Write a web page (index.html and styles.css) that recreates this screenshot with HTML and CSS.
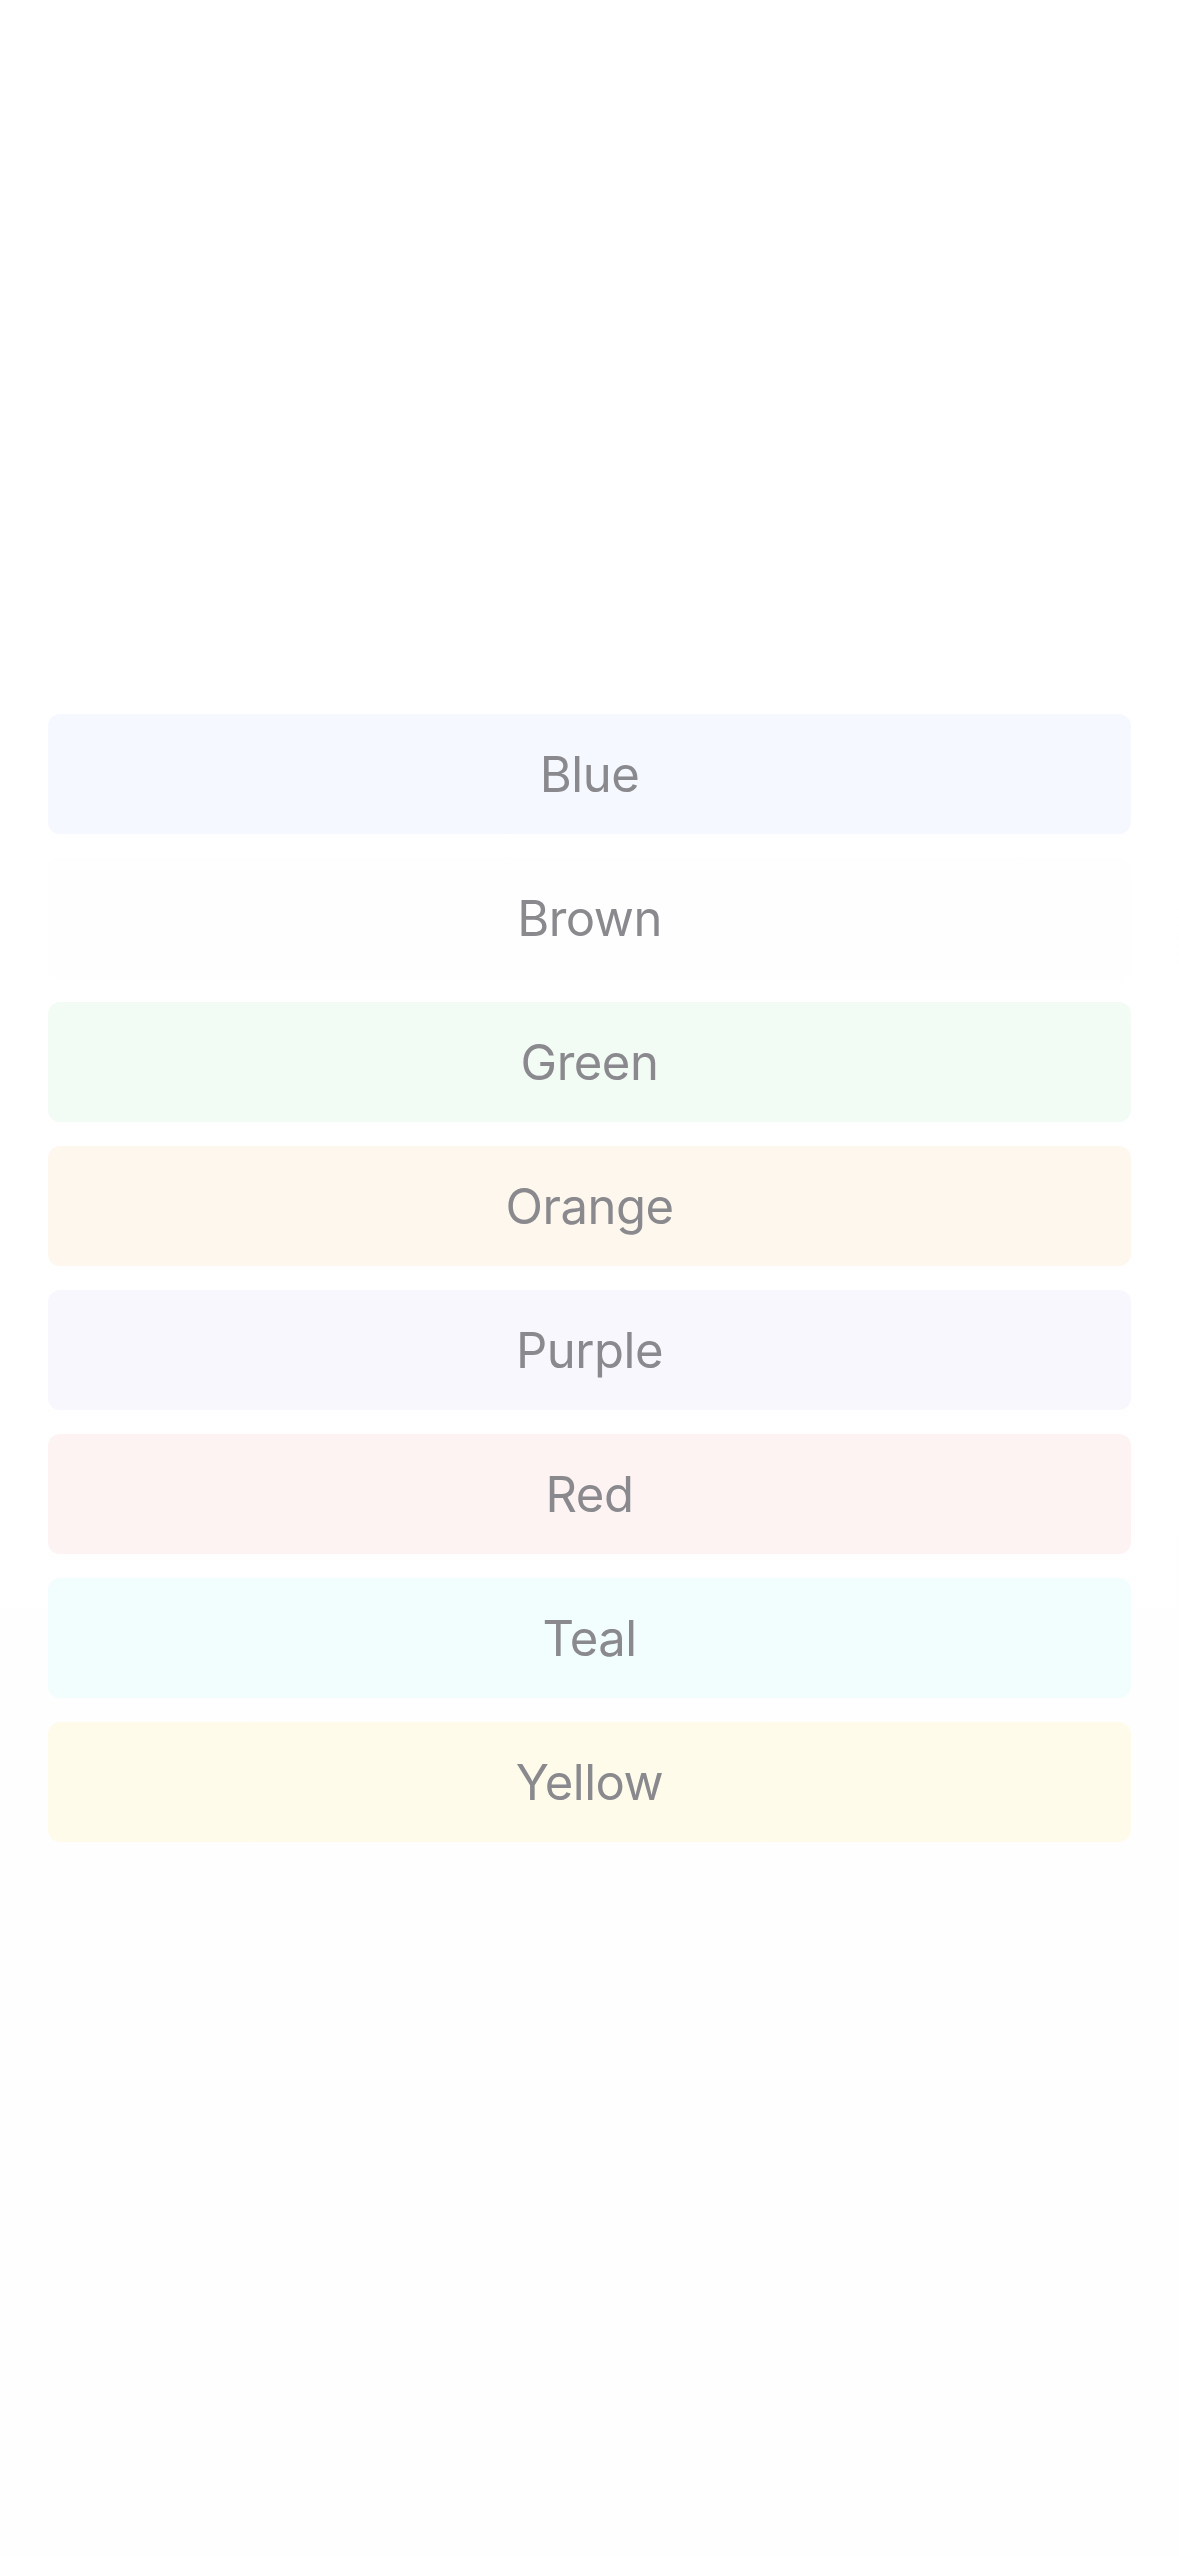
FILE: index.html
```html
<!DOCTYPE html>
<html lang="en">
<head>
<meta charset="utf-8">
<meta name="viewport" content="width=1179">
<title>Colors</title>
<link rel="stylesheet" href="styles.css">
</head>
<body>
<main class="screen">
  <ul class="color-list">
    <li class="color-item blue">Blue</li>
    <li class="color-item brown">Brown</li>
    <li class="color-item green">Green</li>
    <li class="color-item orange">Orange</li>
    <li class="color-item purple">Purple</li>
    <li class="color-item red">Red</li>
    <li class="color-item teal">Teal</li>
    <li class="color-item yellow">Yellow</li>
  </ul>
</main>
</body>
</html>
```
FILE: styles.css
```css
html, body {
  margin: 0;
  padding: 0;
}
body {
  width: 1179px;
  min-height: 2556px;
  background: linear-gradient(#ffffff 0, #ffffff 700px, #fefefe 1900px, #fefefe 100%);
  font-family: Inter, "Noto Sans", "Liberation Sans", sans-serif;
}
.screen {
  padding: 714px 48px 0;
}
.color-list {
  list-style: none;
  margin: 0;
  padding: 0;
  display: flex;
  flex-direction: column;
  gap: 24px;
}
.color-item {
  height: 120px;
  border-radius: 12px;
  display: flex;
  align-items: center;
  justify-content: center;
  font-size: 49px;
  letter-spacing: -0.5px;
  color: #8a8a8e;
  line-height: 1;
}
.blue { background: #f5f8fe; }
.brown { background: #fefefe; }
.green { background: #f2fbf4; }
.orange { background: #fef7ee; }
.purple { background: #f8f7fd; }
.red { background: #fdf3f3; }
.teal { background: #f2fefd; }
.yellow { background: #fffbeb; }
```
